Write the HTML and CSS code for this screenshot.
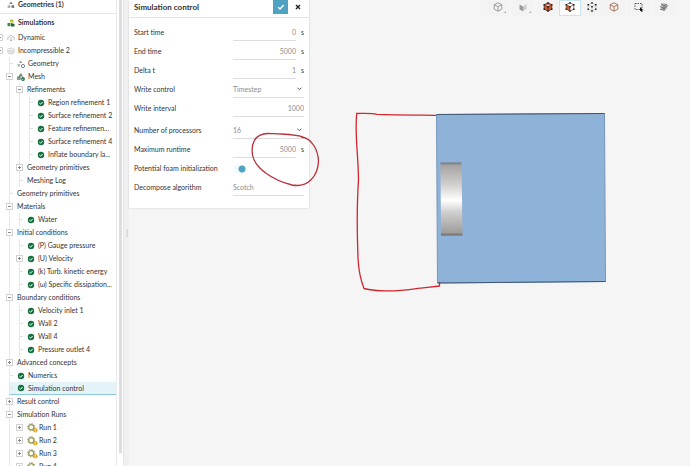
FILE: index.html
```html
<!DOCTYPE html>
<html lang="en">
    <head>
        <meta charset="utf-8" />
        <meta name="viewport" content="width=device-width, initial-scale=1" />
        <title>Simulation control</title>
        <link rel="stylesheet" href="styles.css">
    </head>

    <body>
        <svg class="defs" width="0" height="0">
            <symbol id="check" viewBox="0 0 8 8">
                <circle cx="4" cy="4" r="3.2" fill="#14713f" />
                <path d="M2.4 4.1l1.2 1.1 2-2.2" fill="none" stroke="#fff" stroke-width="1" />
            </symbol>
            <symbol id="shapes" viewBox="0 0 8 8">
                <path d="M4 .5L6 3H2z" fill="#888" />
                <circle cx="2" cy="5.6" r="1.5" fill="#aaa" />
                <path d="M4.5 4.2h2.7v2.7H4.5z" fill="#777" />
            </symbol>
            <symbol id="sims" viewBox="0 0 8 8">
                <path d="M3 .5h3l1 3H3z" fill="#b9c93a" />
                <path d="M.5 4h3v3.2h-3z" fill="#3c8a4e" />
                <path d="M4 4l3.5 1v2.5H4z" fill="#2d5f3c" />
            </symbol>
            <symbol id="shapes-ok" viewBox="0 0 8 8">
                <path d="M3.6.5l1.7 2.4H2z" fill="#999" />
                <path d="M.6 4h2.2v2.4H.6z" fill="#aaa" />
                <circle cx="6" cy="6" r="1.6" fill="#fff" stroke="#567" stroke-width=".8" />
            </symbol>
            <symbol id="mesh" viewBox="0 0 8 8">
                <path d="M3.8.4l1.8 2.8H2zM.5 3.8h2.8v2.8H.5z" fill="#7fa08b" stroke="#446052" stroke-width=".5" />
                <circle cx="6" cy="6" r="1.9" fill="#14713f" />
                <path d="M5 6l.8.7L7 5.4" fill="none" stroke="#fff" stroke-width=".6" />
            </symbol>
            <symbol id="gear" viewBox="0 0 11 10">
                <circle cx="4.2" cy="4.2" r="2.6" fill="none" stroke="#9a9a58" stroke-width="1.3" />
                <circle cx="4.2" cy="4.2" r="3.6" fill="none" stroke="#9a9a58" stroke-width="1" stroke-dasharray="1.4 1.4" />
                <circle cx="8.3" cy="7.3" r="2.3" fill="#d9a928" />
                <path d="M8.3 5.8v1.7M8.3 8.1v.8" stroke="#fff" stroke-width=".8" />
            </symbol>
            <symbol id="cube" viewBox="0 0 10 10">
                <path d="M5 .8l3.8 1.9v4.4L5 9.2 1.2 7.1V2.7zM1.2 2.7L5 4.7l3.8-2M5 4.7v4.5" />
            </symbol>
            <symbol id="nodes" viewBox="0 0 10 10">
                <path d="M5 .2v1.500M5 4v1.500M5 8.300v1.500M.5 2.700h1.500M8 2.700h1.500M.5 7.200h1.500M8 7.200h1.500" stroke="#222" stroke-width="1.500" />
            </symbol>
        </svg>

        <div class="app">
            <nav class="sidebar">
                <div class="row title first"><svg class="icon"><use href="#shapes" /></svg>Geometries (1)</div>
                <div class="row title"><svg class="icon"><use href="#sims" /></svg>Simulations</div>
                <ul class="tree">
                    <li>
                        <div class="row sim"><i class="toggle"></i>
                            <svg class="icon" viewBox="0 0 8 8"><path d="M1.500 6C-.2 5 .8 3 2 3.200 2.500.8 5.500.8 6 3.200 7.800 3 8 5.500 6.500 6M4 3v4M3 6l1 1 1-1" fill="none" stroke="#aaa" stroke-width=".8" /></svg>Dynamic
                        </div>
                    </li>
                    <li>
                        <div class="row"><i class="toggle"></i>
                            <svg class="icon" viewBox="0 0 8 8"><path d="M.7 2.500v3c1 2 5.600 2 6.600 0v-3" fill="#e4e4e4" stroke="#c4c4c4" stroke-width=".6" /><ellipse cx="4" cy="2.500" rx="3.300" ry="1.300" fill="#f3f3f3" stroke="#c4c4c4" stroke-width=".6" /></svg>Incompressible 2
                        </div>
                        <ul>
                            <li><div class="row"><i class="stub"></i><svg class="icon"><use href="#shapes-ok" /></svg>Geometry</div></li>
                            <li>
                                <div class="row"><i class="toggle"></i><svg class="icon"><use href="#mesh" /></svg>Mesh</div>
                                <ul>
                                    <li>
                                        <div class="row"><i class="toggle"></i>Refinements</div>
                                        <ul>
                                            <li><div class="row"><i class="stub"></i><svg class="icon"><use href="#check" /></svg>Region refinement 1</div></li>
                                            <li><div class="row"><i class="stub"></i><svg class="icon"><use href="#check" /></svg>Surface refinement 2</div></li>
                                            <li><div class="row"><i class="stub"></i><svg class="icon"><use href="#check" /></svg>Feature refinemen...</div></li>
                                            <li><div class="row"><i class="stub"></i><svg class="icon"><use href="#check" /></svg>Surface refinement 4</div></li>
                                            <li><div class="row"><i class="stub"></i><svg class="icon"><use href="#check" /></svg>Inflate boundary la...</div></li>
                                        </ul>
                                    </li>
                                    <li><div class="row"><i class="toggle plus"></i>Geometry primitives</div></li>
                                    <li><div class="row"><i class="stub"></i>Meshing Log</div></li>
                                </ul>
                            </li>
                            <li><div class="row"><i class="stub"></i>Geometry primitives</div></li>
                            <li>
                                <div class="row"><i class="toggle"></i>Materials</div>
                                <ul>
                                    <li><div class="row"><i class="stub"></i><svg class="icon"><use href="#check" /></svg>Water</div></li>
                                </ul>
                            </li>
                            <li>
                                <div class="row"><i class="toggle"></i>Initial conditions</div>
                                <ul>
                                    <li><div class="row"><i class="stub"></i><svg class="icon"><use href="#check" /></svg>(P) Gauge pressure</div></li>
                                    <li><div class="row"><i class="toggle plus"></i><svg class="icon"><use href="#check" /></svg>(U) Velocity</div></li>
                                    <li><div class="row"><i class="stub"></i><svg class="icon"><use href="#check" /></svg>(k) Turb. kinetic energy</div></li>
                                    <li><div class="row"><i class="stub"></i><svg class="icon"><use href="#check" /></svg>(ω) Specific dissipation...</div></li>
                                </ul>
                            </li>
                            <li>
                                <div class="row"><i class="toggle"></i>Boundary conditions</div>
                                <ul>
                                    <li><div class="row"><i class="stub"></i><svg class="icon"><use href="#check" /></svg>Velocity inlet 1</div></li>
                                    <li><div class="row"><i class="stub"></i><svg class="icon"><use href="#check" /></svg>Wall 2</div></li>
                                    <li><div class="row"><i class="stub"></i><svg class="icon"><use href="#check" /></svg>Wall 4</div></li>
                                    <li><div class="row"><i class="stub"></i><svg class="icon"><use href="#check" /></svg>Pressure outlet 4</div></li>
                                </ul>
                            </li>
                            <li><div class="row"><i class="toggle plus"></i>Advanced concepts</div></li>
                            <li><div class="row"><i class="stub"></i><svg class="icon"><use href="#check" /></svg>Numerics</div></li>
                            <li><div class="row selected"><i class="stub"></i><svg class="icon"><use href="#check" /></svg>Simulation control</div></li>
                            <li><div class="row"><i class="toggle plus"></i>Result control</div></li>
                            <li>
                                <div class="row"><i class="toggle"></i>Simulation Runs</div>
                                <ul class="runs">
                                    <li><div class="row"><i class="toggle plus"></i><svg class="icon gear"><use href="#gear" /></svg>Run 1</div></li>
                                    <li><div class="row"><i class="toggle plus"></i><svg class="icon gear"><use href="#gear" /></svg>Run 2</div></li>
                                    <li><div class="row"><i class="toggle plus"></i><svg class="icon gear"><use href="#gear" /></svg>Run 3</div></li>
                                    <li><div class="row"><i class="toggle plus"></i><svg class="icon gear"><use href="#gear" /></svg>Run 4</div></li>
                                </ul>
                            </li>
                        </ul>
                    </li>
                </ul>
            </nav>
            <div class="scroll"><div class="thumb"></div></div>
            <div class="splitter"><i></i></div>

            <main class="viewer">
                <form class="panel">
                    <header>
                        <h1>Simulation control</h1>
                        <button type="button" class="apply" aria-label="Apply"><svg width="8" height="8" viewBox="0 0 8 8"><path d="M1.200 4.200l1.800 1.800 3.700-4" fill="none" stroke="#fff" stroke-width="1.400" /></svg></button>
                        <button type="button" class="close" aria-label="Close"><svg width="6" height="6" viewBox="0 0 6 6"><path d="M1 1l4 4M5 1L1 5" stroke="#222" stroke-width="1.400" /></svg></button>
                    </header>
                    <div class="fields">
                        <div class="field"><label for="start">Start time</label><input id="start" value="0"><span class="unit">s</span></div>
                        <div class="field"><label for="end">End time</label><input id="end" value="5000"><span class="unit">s</span></div>
                        <div class="field"><label for="delta">Delta t</label><input id="delta" value="1"><span class="unit">s</span></div>
                        <div class="field"><label for="control">Write control</label><select id="control"><option>Timestep</option></select></div>
                        <div class="field"><label for="interval">Write interval</label><input id="interval" class="wide" value="1000"></div>
                        <div class="field group"><label for="procs">Number of processors</label><select id="procs"><option>16</option></select></div>
                        <div class="field"><label for="runtime">Maximum runtime</label><input id="runtime" value="5000"><span class="unit">s</span></div>
                        <div class="field"><label for="foam">Potential foam initialization</label><input id="foam" class="switch" type="checkbox" checked></div>
                        <div class="field"><label for="algo">Decompose algorithm</label><select id="algo" class="plain"><option>Scotch</option></select></div>
                    </div>
                </form>

                <div class="toolbar">
                    <button type="button" class="more" aria-label="View cube"><svg class="tool" fill="none" stroke="#888"><use href="#cube" /></svg></button>
                    <button type="button" class="more" aria-label="Projection"><svg class="tool" viewBox="0 0 10 10"><path d="M1.500 2.500L5 4.500v4.800L1.500 7.500z" fill="#999" /><path d="M5 4.500l3.500-2.500v5L5 9.300z" fill="#ccc" /></svg></button>
                    <div class="modes">
                        <button type="button" aria-label="Solid with edges"><svg class="tool" fill="#c65a33" stroke="#5c2b19"><use href="#cube" /><use href="#nodes" /></svg></button>
                        <button type="button" class="on" aria-label="Faces"><svg class="tool" viewBox="0 0 10 10"><path d="M1.200 2.700L5 4.700v4.500L1.200 7.100z" fill="#c65a33" /><path d="M5 .8l3.800 1.900v4.400L5 9.200 1.200 7.100V2.700zM1.200 2.700L5 4.700l3.800-2M5 4.700v4.500" fill="none" stroke="#8a4a30" stroke-width=".8" /><use href="#nodes" /></svg></button>
                        <button type="button" aria-label="Points"><svg class="tool" fill="none" stroke="#bbb"><use href="#cube" /><use href="#nodes" /></svg></button>
                        <button type="button" aria-label="Wireframe"><svg class="tool" fill="none" stroke="#a0583c"><use href="#cube" /></svg></button>
                    </div>
                    <button type="button" aria-label="Box select"><svg class="tool" viewBox="0 0 10 10"><path d="M1 1.500h7v6H1z" fill="none" stroke="#333" stroke-dasharray="1.500 1" /><path d="M6 5l3.500 3.300H8l.5 1.500-1 .2-.6-1.500-.9.800z" fill="#111" /></svg></button>
                    <button type="button" aria-label="Hidden parts"><svg class="tool" viewBox="0 0 10 10"><path d="M2 2l3-1 3 1.500v4.500L5 9 2 7z" fill="#bbb" /><path d="M1 4.500l4 2 4-3M2 2l3 1.500L8 2.500M5 3.500V9M1 7l3 1" fill="none" stroke="#555" stroke-width=".8" /></svg></button>
                </div>
            </main>

            <svg class="scene" width="690" height="466" viewBox="0 0 690 466">
                <defs>
                    <linearGradient id="metal" x1="0" y1="0" x2="0" y2="1">
                        <stop offset="0" stop-color="#747474" />
                        <stop offset=".04" stop-color="#a5a4a2" />
                        <stop offset=".3" stop-color="#d0cfce" />
                        <stop offset=".52" stop-color="#fff" />
                        <stop offset=".68" stop-color="#d0cfcf" />
                        <stop offset=".96" stop-color="#a09e9b" />
                        <stop offset="1" stop-color="#666" />
                    </linearGradient>
                </defs>
                <path d="M436.500 114.500L604.500 113.500 605.500 281.500 437.500 283z" fill="#8fb2d8" stroke="#7697bb" />
                <path d="M436.500 114.500L604.500 113.500M437.500 283L605.500 281.500" stroke="#3f5874" />
                <path d="M440.500 162.500L461.500 162.500 462.500 235.500 441 235.500z" fill="url(#metal)" />
                <path class="ink" d="M436 115.300C414 115 393 114.800 377 114.300 371 113 363 113.500 356.700 113.500 354.500 135 358.500 156 358.500 180 356.500 209 357 232 358 258 358.500 270 361 281 364 288.500 379 292.500 403 290.500 418 288.300 427 287.500 433 286.500 439.500 286V282" />
                <path class="ink thick" d="M304 137.500C298 134.500 287 134.300 268 133.500 254 134 251 144 252.500 155 255 168 272 180 292 185 308 188 318 176 318.500 161 318 150 312 138 301 137" />
            </svg>
        </div>
    </body>
</html>
```
FILE: styles.css
```css
* {
    box-sizing: border-box;
}
body {
    margin: 0;
    font: 7px/13px Lato, "Open Sans", sans-serif;
    color: #333;
    background: #f5f5f5;
}
button,
input,
select {
    font: inherit;
    margin: 0;
    padding: 0;
    border: 0;
    border-radius: 0;
    background: none;
    appearance: none;
}
.defs {
    display: block;
}
.app {
    position: relative;
    display: flex;
    height: 100vh;
    overflow: hidden;
}

/* tree */
.sidebar {
    flex: 0 0 117px;
    overflow: hidden;
    background: #fff;
    border-right: 1px solid #e8eaee;
}
ul {
    list-style: none;
    margin: 0;
    padding: 0;
}
.row {
    display: flex;
    align-items: center;
    height: 13px;
    white-space: nowrap;
}
.title {
    height: 17px;
    padding-left: 7px;
    font-weight: 700;
}
.first {
    height: 14px;
    padding-bottom: 4px;
    border-bottom: 1px solid #e6e6e6;
}
.icon {
    flex: none;
    width: 8px;
    height: 8px;
    margin-right: 3px;
}
.tree li ul {
    margin-left: 9px;
    border-left: 1px solid #e3e8ee;
}
.tree li .runs {
    border-color: transparent;
}
.toggle {
    position: relative;
    flex: none;
    width: 7px;
    height: 7px;
    margin: 0 4px 0 -4px;
    border: 1px solid #d2d2d2;
    background: linear-gradient(#888, #888) center / 3px 1px no-repeat #fff;
}
.plus {
    background: linear-gradient(#888, #888) center / 3px 1px no-repeat, linear-gradient(#888, #888) center / 1px 3px no-repeat #fff;
}
.stub {
    flex: none;
    width: 3px;
    height: 1px;
    margin-right: 4px;
    background: #dde2e8;
}
.gear {
    width: 11px;
    height: 10px;
    margin-right: 1px;
}
.selected {
    background: #e3f3f8;
    border-bottom: 1px solid #8fcbd6;
}
.scroll {
    flex: 0 0 6px;
    padding: 0 1px 13px 2px;
    background: #fff;
}
.thumb {
    height: 100%;
    background: #dcdde3;
}
.splitter {
    flex: 0 0 6px;
    display: flex;
    align-items: center;
    justify-content: center;
    border-left: 1px solid #e6e6e6;
    background: #f0f0f0;
}
.splitter i {
    width: 2px;
    height: 8px;
    background: #ddd;
}

/* settings panel */
.viewer {
    flex: 1;
    display: flex;
    justify-content: space-between;
    align-items: flex-start;
}
.panel {
    width: 180px;
    background: #fff;
    box-shadow: 0 0 2px #ccc;
}
.panel header {
    display: flex;
    height: 18px;
    border-bottom: 1px solid #e4e4e4;
}
h1 {
    flex: 1;
    margin: 0;
    padding-left: 5px;
    font-size: 8px;
    line-height: 14px;
}
.apply,
.close {
    display: flex;
    align-items: center;
    justify-content: center;
    width: 15px;
    height: 14px;
}
.apply {
    background: #50a2c2;
}
.close {
    margin: 0 4px 0 2px;
}
.fields {
    padding: 5px 5px 11px;
}
.field {
    display: flex;
    align-items: center;
    height: 19px;
}
.group {
    margin-top: 3px;
}
label {
    flex: 1;
}
.field input,
.field select {
    width: 63px;
    height: 17px;
    color: #8c8c8c;
    text-align: right;
    border-bottom: 1px solid #ddd;
}
.field select,
.field .wide {
    width: 71px;
}
.field select {
    text-align: left;
    background: url("data:image/svg+xml,%3Csvg xmlns='http://www.w3.org/2000/svg' width='5' height='4'%3E%3Cpath d='M.5.7l2 2 2-2' fill='none' stroke='%23555'/%3E%3C/svg%3E") right 2px center no-repeat;
}
.field .plain {
    background: none;
}
.unit {
    width: 8px;
    padding-left: 5px;
}
.field .switch {
    width: 14px;
    height: 8px;
    margin-right: 57px;
    border: 0;
    border-radius: 4px;
    background: radial-gradient(circle at 9px 4px, #50a2c2 3px, #f3f9fb 4px);
}

/* view tools */
.toolbar {
    display: flex;
    gap: 3px;
    padding-right: 15px;
}
.modes {
    display: flex;
}
.toolbar button {
    position: relative;
    display: flex;
    align-items: center;
    justify-content: center;
    width: 22px;
    height: 16px;
    padding-bottom: 3px;
    background: #f3f3f3;
}
.toolbar .on {
    background: #fff;
    box-shadow: inset 0 0 0 1px #c9e6f0;
}
.toolbar .more::after {
    content: "";
    position: absolute;
    right: 3px;
    bottom: 3px;
    border: 1px solid #aaa;
    border-top-color: transparent;
    border-left-color: transparent;
}
.tool {
    width: 10px;
    height: 10px;
    stroke-width: .8;
}

.scene {
    position: absolute;
    top: 0;
    left: 0;
    pointer-events: none;
}
.ink {
    fill: none;
    stroke: #d0262e;
    stroke-width: 1.3;
}
.thick {
    stroke: #b8323c;
}
```
